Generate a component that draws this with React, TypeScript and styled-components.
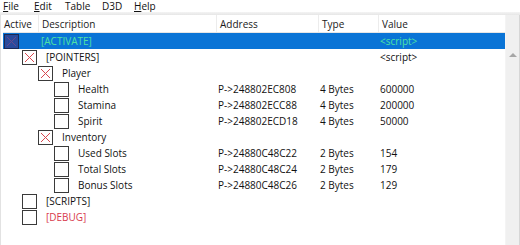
import React from "react";
import styled, { createGlobalStyle, css } from "styled-components";

const GlobalStyle = createGlobalStyle`
  html, body { margin: 0; padding: 0; background: #ffffff; }
  body { font-family: "Open Sans", "Noto Sans", sans-serif; font-size: 10px; color: #111; }
`;

const Window = styled.div`
  width: 520px;
  height: 245px;
  overflow: hidden;
  display: flex;
  flex-direction: column;
  background: #fff;
`;

const MenuBar = styled.div`
  display: grid;
  grid-template-columns: 31px 31px 37px 32px auto;
  padding-left: 3px;
  height: 12px;
  line-height: 12px;
  font-size: 10px;
  color: #111;
`;

const MenuItem = styled.span`
  u { text-decoration: underline; text-underline-offset: 1px; }
`;

const Band = styled.div`
  height: 3px;
  background: linear-gradient(#f4f4f4, #e6e6e6);
`;

const ListArea = styled.div`
  flex: 1;
  display: flex;
  min-height: 0;
`;

const Tree = styled.div`
  flex: 1;
  display: flex;
  flex-direction: column;
  padding-left: 2px;
  border-left: 1px solid #e2e2e2;
`;

const Header = styled.div`
  display: grid;
  grid-template-columns: 35px 178px 102px 60px 1fr;
  height: 17px;
  align-items: stretch;
  border-bottom: 1px solid #e6e6e6;
  background: #fff;
`;

const HeadCell = styled.div<{ $first?: boolean }>`
  display: flex;
  align-items: center;
  padding-left: ${(p) => (p.$first ? "1px" : "3px")};
  border-left: ${(p) => (p.$first ? "none" : "1px solid #ececec")};
  color: #1a1a1a;
  font-size: 10px;
`;

const Row = styled.div<{ $selected?: boolean }>`
  display: grid;
  grid-template-columns: 213px 102px 60px 1fr;
  height: 16px;
  align-items: center;
  white-space: nowrap;
  ${(p) =>
    p.$selected &&
    css`
      background: #0a74d6;
    `}
`;

const TreeCell = styled.div<{ $level: number }>`
  display: flex;
  align-items: center;
  padding-left: ${(p) => (p.$level === 0 ? 1 : 3 + p.$level * 16)}px;
`;

const Label = styled.span<{ $tone: string; $level: number }>`
  margin-left: ${(p) => (p.$level === 0 ? 22 : 9)}px;
  color: ${(p) => p.$tone};
`;

const Cell = styled.div<{ $tone?: string }>`
  padding-left: 2px;
  color: ${(p) => p.$tone || "#111"};
`;

const ScrollBar = styled.div`
  width: 15px;
  background: #f0f0f0;
  border-left: 1px solid #f4f4f4;
  border-right: 1px solid #d6d6d6;
  display: flex;
  justify-content: center;
  padding-top: 38px;
  box-sizing: border-box;
`;

const Arrow = styled.div`
  width: 0;
  height: 0;
  border-left: 4px solid transparent;
  border-right: 4px solid transparent;
  border-bottom: 4px solid #a6a6a6;
`;

type Check = "x" | "empty" | "active";

const CheckBox = ({ kind }: { kind: Check }) => {
  const active = kind === "active";
  return (
    <svg width="15" height="15" viewBox="0 0 15 15" style={{ flex: "none" }}>
      <rect
        x="0.5"
        y="0.5"
        width="14"
        height="14"
        fill={active ? "#2a4a9c" : "#fff"}
        stroke={active ? "#1b2a55" : "#3a3a3a"}
      />
      {kind !== "empty" && (
        <path
          d="M3 3 L12 12 M12 3 L3 12"
          stroke={active ? "#6a4a8a" : "#d9474f"}
          strokeWidth="1"
        />
      )}
    </svg>
  );
};

type Entry = {
  level: number;
  label: string;
  check: Check;
  address?: string;
  type?: string;
  value?: string;
  tone?: string;
  selected?: boolean;
};

const GREEN = "#4fe2a4";
const RED = "#d83a4c";

const entries: Entry[] = [
  { level: 0, label: "[ACTIVATE]", check: "active", value: "<script>", tone: GREEN, selected: true },
  { level: 1, label: "[POINTERS]", check: "x", value: "<script>" },
  { level: 2, label: "Player", check: "x" },
  { level: 3, label: "Health", check: "empty", address: "P->248802EC808", type: "4 Bytes", value: "600000" },
  { level: 3, label: "Stamina", check: "empty", address: "P->248802ECC88", type: "4 Bytes", value: "200000" },
  { level: 3, label: "Spirit", check: "empty", address: "P->248802ECD18", type: "4 Bytes", value: "50000" },
  { level: 2, label: "Inventory", check: "x" },
  { level: 3, label: "Used Slots", check: "empty", address: "P->24880C48C22", type: "2 Bytes", value: "154" },
  { level: 3, label: "Total Slots", check: "empty", address: "P->24880C48C24", type: "2 Bytes", value: "179" },
  { level: 3, label: "Bonus Slots", check: "empty", address: "P->24880C48C26", type: "2 Bytes", value: "129" },
  { level: 1, label: "[SCRIPTS]", check: "empty" },
  { level: 1, label: "[DEBUG]", check: "empty", tone: RED },
];

export default function App() {
  return (
    <>
      <GlobalStyle />
      <Window>
        <MenuBar>
          <MenuItem><u>F</u>ile</MenuItem>
          <MenuItem><u>E</u>dit</MenuItem>
          <MenuItem>Table</MenuItem>
          <MenuItem>D3D</MenuItem>
          <MenuItem><u>H</u>elp</MenuItem>
        </MenuBar>
        <Band />
        <ListArea>
          <Tree>
            <Header>
              <HeadCell $first>Active</HeadCell>
              <HeadCell>Description</HeadCell>
              <HeadCell>Address</HeadCell>
              <HeadCell>Type</HeadCell>
              <HeadCell>Value</HeadCell>
            </Header>
            {entries.map((e, i) => (
              <Row key={i} $selected={e.selected}>
                <TreeCell $level={e.level}>
                  <CheckBox kind={e.check} />
                  <Label $level={e.level} $tone={e.tone || "#111"}>
                    {e.label}
                  </Label>
                </TreeCell>
                <Cell>{e.address}</Cell>
                <Cell>{e.type}</Cell>
                <Cell $tone={e.selected ? GREEN : undefined}>{e.value}</Cell>
              </Row>
            ))}
          </Tree>
          <ScrollBar>
            <Arrow />
          </ScrollBar>
        </ListArea>
      </Window>
    </>
  );
}
